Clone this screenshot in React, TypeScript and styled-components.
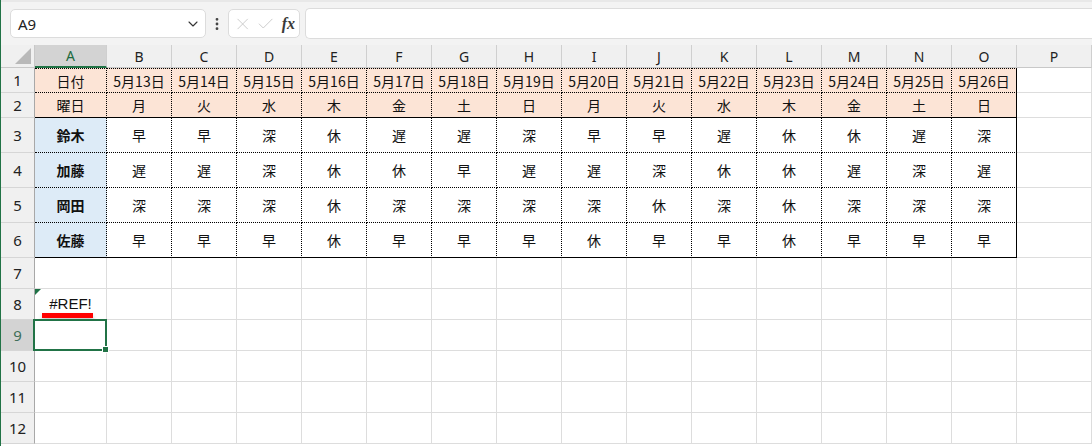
import styled, { createGlobalStyle } from "styled-components"
import { ChevronDown, EllipsisVertical, X, Check } from "lucide-react"

const GlobalStyle = createGlobalStyle`
    html, body {
        margin: 0;
        padding: 0;
        background: #ffffff;
        overflow: hidden;
    }
    body {
        font-family: "Noto Sans", "Noto Sans CJK JP", sans-serif;
    }
`

const columns = ['A', 'B', 'C', 'D', 'E', 'F', 'G', 'H', 'I', 'J', 'K', 'L', 'M', 'N', 'O', 'P']
const dates = ['5月13日', '5月14日', '5月15日', '5月16日', '5月17日', '5月18日', '5月19日', '5月20日', '5月21日', '5月22日', '5月23日', '5月24日', '5月25日', '5月26日']
const weekdays = ['月', '火', '水', '木', '金', '土', '日', '月', '火', '水', '木', '金', '土', '日']

const shifts = [
    { name: '鈴木', days: '早早深休遅遅深早早遅休休遅深' },
    { name: '加藤', days: '遅遅深休休早遅遅深休休遅深遅' },
    { name: '岡田', days: '深深深休深深深深休深休深深深' },
    { name: '佐藤', days: '早早早休早早早休早早休早早早' },
]

const Window = styled.div`
    display: flex;
    flex-direction: column;
    width: 1092px;
    height: 446px;
    border-left: 1px solid #217346;
    box-sizing: border-box;
`

const FormulaBar = styled.div`
    display: flex;
    align-items: center;
    height: 45px;
    box-sizing: border-box;
    padding: 8px 0 8px 9px;
    background: #f3f3f3;
    border-top: 2px solid #e8e8e8;
`

const NameBox = styled.div`
    display: flex;
    align-items: center;
    justify-content: space-between;
    width: 196px;
    height: 29px;
    box-sizing: border-box;
    padding: 0 4px 0 7px;
    background: #ffffff;
    border: 1px solid #dcdcdc;
    border-radius: 5px;
    font-size: 15px;
    color: #222;
`

const Grip = styled.div`
    display: flex;
    justify-content: center;
    width: 22px;
    color: #444;
`

const FxBox = styled.div`
    display: flex;
    align-items: center;
    gap: 4px;
    width: 72px;
    height: 29px;
    box-sizing: border-box;
    padding: 0 4px 0 4px;
    background: #ffffff;
    border: 1px solid #dcdcdc;
    border-radius: 5px;
    color: #c6c6c6;
`

const FxLabel = styled.span`
    font-family: "Liberation Serif", serif;
    font-style: italic;
    font-weight: bold;
    font-size: 16px;
    color: #3a3a3a;
    margin-left: 2px;
`

const FormulaInput = styled.div`
    flex: 1;
    height: 29px;
    margin-left: 5px;
    background: #ffffff;
    border: 1px solid #dcdcdc;
    border-right: none;
    border-radius: 5px 0 0 5px;
`

const Sheet = styled.div`
    display: grid;
    grid-template-columns: 34px 72px repeat(14, 65px) 1fr;
    grid-template-rows: 23px 25px 25px 35px 35px 35px 35px repeat(6, 31px);
    flex: 1;
`

const Corner = styled.div`
    position: relative;
    background: #f0f0f0;
    border-right: 1px solid #c8c8c8;
    border-bottom: 1px solid #c8c8c8;
    &::after {
        content: '';
        position: absolute;
        right: 3px;
        bottom: 3px;
        width: 16px;
        height: 16px;
        background: #b9b9b9;
        clip-path: polygon(100% 0, 100% 100%, 0 100%);
    }
`

const ColHead = styled.div<{ $active?: boolean }>`
    display: flex;
    align-items: center;
    justify-content: center;
    box-sizing: border-box;
    font-size: 14px;
    color: ${({ $active }) => ($active ? '#1d6b40' : '#222')};
    background: ${({ $active }) => ($active ? '#d3d3d3' : '#f0f0f0')};
    border-right: 1px solid #cfcfcf;
    border-bottom: ${({ $active }) => ($active ? '2px solid #217346' : '1px solid #c8c8c8')};
`

const RowHead = styled.div<{ $active?: boolean }>`
    display: flex;
    align-items: center;
    justify-content: center;
    box-sizing: border-box;
    font-size: 15px;
    color: ${({ $active }) => ($active ? '#3f6f59' : '#222')};
    background: ${({ $active }) => ($active ? '#d3d3d3' : '#f0f0f0')};
    border-right: 1px solid #a8a8a8;
    border-bottom: 1px solid #d6d6d6;
`

type Edge = 'grid' | 'dot' | 'solid'

const edge = (e: Edge) =>
    e === 'solid' ? '1px solid #000' : e === 'dot' ? '1px dotted #000' : '1px solid #dddddd'

const Cell = styled.div<{ $bg?: string; $top?: Edge; $right: Edge; $bottom: Edge; $bold?: boolean }>`
    position: relative;
    display: flex;
    align-items: center;
    justify-content: center;
    box-sizing: border-box;
    font-family: "Noto Sans CJK JP", sans-serif;
    font-size: 14px;
    font-weight: ${({ $bold }) => ($bold ? 700 : 400)};
    color: #111;
    background: ${({ $bg }) => $bg || '#ffffff'};
    border-top: ${({ $top }) => ($top ? edge($top) : 'none')};
    border-right: ${({ $right }) => edge($right)};
    border-bottom: ${({ $bottom }) => edge($bottom)};
`

const ErrorText = styled.span`
    font-family: "Liberation Sans", sans-serif;
    font-size: 15px;
    color: #111;
    margin-top: -2px;
`

const ErrorMark = styled.div`
    position: absolute;
    left: 0;
    top: 0;
    width: 6px;
    height: 6px;
    background: #1e7145;
    clip-path: polygon(0 0, 100% 0, 0 100%);
`

const Squiggle = styled.div`
    position: absolute;
    left: 7px;
    bottom: 1px;
    width: 51px;
    height: 5px;
    background: #ff0000;
    box-shadow: 0 3px 4px rgba(0, 0, 0, 0.25);
`

const Selection = styled.div`
    position: absolute;
    inset: -1px -1px -1px -2px;
    border: 2px solid #217346;
    z-index: 2;
    &::after {
        content: '';
        position: absolute;
        right: -4px;
        bottom: -4px;
        width: 5px;
        height: 5px;
        background: #217346;
        border: 1px solid #ffffff;
    }
`

const PEACH = '#fce4d6'
const BLUE = '#ddebf7'

const App = () => {
    const rows: React.ReactNode[] = []

    // row 1 and 2: dates and weekdays
    const headRows = [
        { label: '日付', values: dates },
        { label: '曜日', values: weekdays },
    ]
    headRows.forEach((r, ri) => {
        rows.push(<RowHead key={`rh${ri}`}>{ri + 1}</RowHead>)
        const bottom: Edge = ri === 1 ? 'solid' : 'dot'
        const top: Edge | undefined = ri === 0 ? 'dot' : undefined
        rows.push(<Cell key={`a${ri}`} $bg={PEACH} $top={top} $right="dot" $bottom={bottom}>{r.label}</Cell>)
        r.values.forEach((v, ci) => (
            rows.push(<Cell key={`c${ri}-${ci}`} $bg={PEACH} $top={top} $right={ci === 13 ? 'solid' : 'dot'} $bottom={bottom}>{v}</Cell>)
        ))
        rows.push(<Cell key={`p${ri}`} $right="grid" $bottom="grid" />)
    })

    // rows 3 to 6: shifts
    shifts.forEach((s, si) => {
        const bottom: Edge = si === 3 ? 'solid' : 'dot'
        rows.push(<RowHead key={`rh-s${si}`}>{si + 3}</RowHead>)
        rows.push(<Cell key={`n${si}`} $bg={BLUE} $bold $right="dot" $bottom={bottom}>{s.name}</Cell>)
        Array.from(s.days).forEach((d, ci) => (
            rows.push(<Cell key={`s${si}-${ci}`} $right={ci === 13 ? 'solid' : 'dot'} $bottom={bottom}>{d}</Cell>)
        ))
        rows.push(<Cell key={`sp${si}`} $right="grid" $bottom="grid" />)
    })

    // rows 7 to 12: empty grid
    for (let r = 7; r <= 12; r++) {
        rows.push(<RowHead key={`rh-e${r}`} $active={r === 9}>{r}</RowHead>)
        columns.forEach((c) => {
            const isA = c === 'A'
            rows.push(
                <Cell key={`e${r}-${c}`} $right="grid" $bottom="grid">
                    {isA && r === 8 && (
                        <>
                            <ErrorMark />
                            <ErrorText>#REF!</ErrorText>
                            <Squiggle />
                        </>
                    )}
                    {isA && r === 9 && <Selection />}
                </Cell>
            )
        })
    }

    return (
        <Window>
            <GlobalStyle />
            <FormulaBar>
                <NameBox>
                    A9
                    <ChevronDown size={16} strokeWidth={1.6} color="#333" />
                </NameBox>
                <Grip>
                    <EllipsisVertical size={16} strokeWidth={2.2} />
                </Grip>
                <FxBox>
                    <X size={20} strokeWidth={1.1} />
                    <Check size={20} strokeWidth={1.1} />
                    <FxLabel>fx</FxLabel>
                </FxBox>
                <FormulaInput />
            </FormulaBar>
            <Sheet>
                <Corner />
                {columns.map((c) => (
                    <ColHead key={c} $active={c === 'A'}>{c}</ColHead>
                ))}
                {rows}
            </Sheet>
        </Window>
    )
}

export default App
